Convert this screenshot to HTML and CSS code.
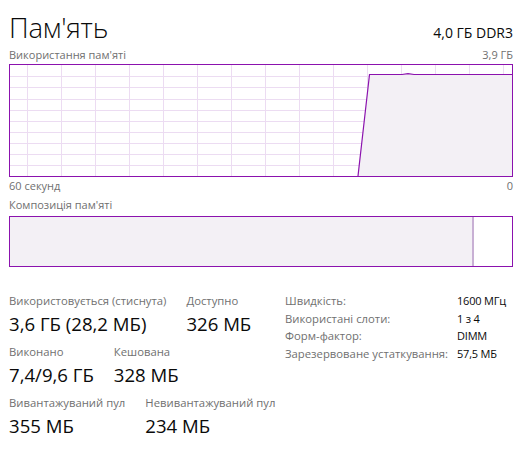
FILE: index.html
```html
<!DOCTYPE html>
<html lang="uk">
<head>
    <meta charset="UTF-8">
    <title>Пам'ять</title>
    <link rel="stylesheet" href="styles.css">
</head>
<body>
    <div class="page">
        <header class="head">
            <h1>Пам'ять</h1>
            <div class="model">4,0 ГБ DDR3</div>
        </header>

        <div class="caption">
            <span>Використання пам'яті</span>
            <span>3,9 ГБ</span>
        </div>
        <div class="graph">
            <svg width="502" height="111" viewBox="0 0 502 111">
                <g class="grid">
                    <path d="M0 11.5H502M0 22.5H502M0 34.5H502M0 45.5H502M0 56.5H502M0 67.5H502M0 78.5H502M0 89.5H502M0 100.5H502"/>
                    <path d="M17.5 0V111M51.5 0V111M85.5 0V111M119.5 0V111M153.5 0V111M187.5 0V111M221.5 0V111M255.5 0V111M289.5 0V111M323.5 0V111M357.5 0V111M391.5 0V111M425.5 0V111M459.5 0V111M493.5 0V111"/>
                </g>
                <path class="area" d="M348 111L359.5 9.5H392L398 8.6L404 9.5H502V111Z"/>
                <path class="line" d="M348 111L359.5 9.5H392L398 8.6L404 9.5H502"/>
            </svg>
        </div>
        <div class="caption">
            <span>60 секунд</span>
            <span>0</span>
        </div>

        <div class="caption caption-single">Композиція пам'яті</div>
        <div class="bar">
            <div class="bar-used"></div>
        </div>

        <section class="details">
            <div class="stats">
                <div class="stat-row">
                    <div class="stat">
                        <div class="stat-label">Використовується (стиснута)</div>
                        <div class="stat-value">3,6 ГБ (28,2 МБ)</div>
                    </div>
                    <div class="stat">
                        <div class="stat-label">Доступно</div>
                        <div class="stat-value">326 МБ</div>
                    </div>
                </div>
                <div class="stat-row">
                    <div class="stat">
                        <div class="stat-label">Виконано</div>
                        <div class="stat-value">7,4/9,6 ГБ</div>
                    </div>
                    <div class="stat">
                        <div class="stat-label">Кешована</div>
                        <div class="stat-value">328 МБ</div>
                    </div>
                </div>
                <div class="stat-row">
                    <div class="stat">
                        <div class="stat-label">Вивантажуваний пул</div>
                        <div class="stat-value">355 МБ</div>
                    </div>
                    <div class="stat">
                        <div class="stat-label">Невивантажуваний пул</div>
                        <div class="stat-value">234 МБ</div>
                    </div>
                </div>
            </div>

            <dl class="props">
                <dt>Швидкість:</dt>
                <dd>1600 МГц</dd>
                <dt>Використані слоти:</dt>
                <dd>1 з 4</dd>
                <dt>Форм-фактор:</dt>
                <dd>DIMM</dd>
                <dt>Зарезервоване устаткування:</dt>
                <dd>57,5 МБ</dd>
            </dl>
        </section>
    </div>
</body>
</html>
```

FILE: styles.css
```css
:root {
    --accent: #8b12ae;
    --grid: #ecdcf2;
    --fill: #f3f0f5;
    --muted: #707070;
    --text: #0a0a0a;
}

body {
    margin: 0;
    background: #fff;
    color: var(--text);
    font-family: 'Open Sans', 'Noto Sans', sans-serif;
}

.page {
    width: 504px;
    padding: 10px 12px 0 9px;
}

.head {
    display: flex;
    justify-content: space-between;
    align-items: baseline;
    height: 36px;
}

h1 {
    margin: 0;
    font-size: 27.5px;
    font-weight: 300;
    line-height: 36px;
    letter-spacing: -0.2px;
}

.model {
    font-size: 14px;
}

.caption {
    display: flex;
    justify-content: space-between;
    font-size: 11px;
    line-height: 18px;
    color: var(--muted);
}

.caption-single {
    margin-top: 1px;
}

.graph {
    border: 1px solid var(--accent);
    height: 111px;
}

.graph svg {
    display: block;
}

.grid path {
    fill: none;
    stroke: var(--grid);
    stroke-width: 1;
}

.area {
    fill: var(--fill);
}

.line {
    fill: none;
    stroke: var(--accent);
    stroke-width: 1.2;
}

.bar {
    border: 1px solid var(--accent);
    height: 49px;
    margin-top: 2px;
    display: flex;
}

.bar-used {
    width: 462px;
    background: var(--fill);
    border-right: 2px solid #c8b0d4;
}

.details {
    display: flex;
    align-items: flex-start;
    margin-top: 25px;
}

.stats {
    flex: none;
    width: 276px;
    white-space: nowrap;
}

.stat-row {
    display: flex;
    gap: 20px;
    margin-bottom: 5px;
}

.stat-label {
    font-size: 11.3px;
    line-height: 18px;
    color: var(--muted);
}

.stat-value {
    font-size: 18.6px;
    line-height: 28px;
}

.props {
    display: grid;
    grid-template-columns: 172px auto;
    margin: 0;
    font-size: 11.3px;
    line-height: 17.7px;
    white-space: nowrap;
}

.props dt {
    color: var(--muted);
}

.props dd {
    margin: 0;
    font-size: 11px;
    letter-spacing: -0.2px;
}
```
